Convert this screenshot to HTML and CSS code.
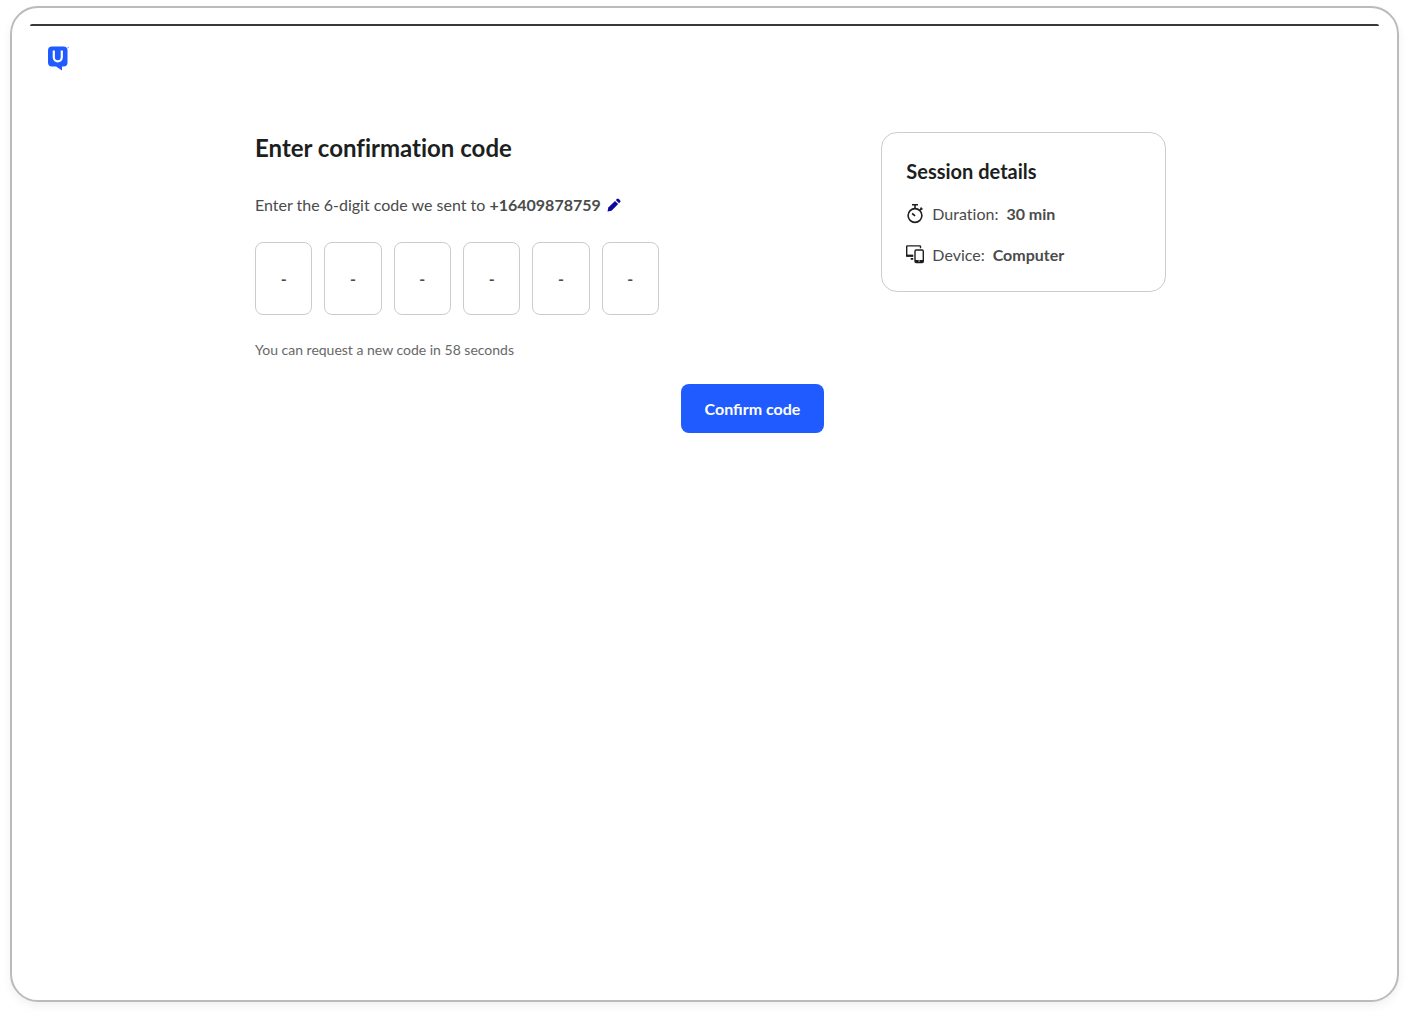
FILE: index.html
```html
<!DOCTYPE html>
<html lang="en">
<head>
  <meta charset="UTF-8" />
  <meta name="viewport" content="width=device-width, initial-scale=1.0"/>
  <title>Enter confirmation code</title>
  <link rel="stylesheet" href="styles.css">
</head>
<body>
  <div class="window">
    <div class="top-line"></div>

    <header class="header">
      <a href="#" class="logo" aria-label="Home">
        <svg width="21" height="25" viewBox="0 0 21 25">
          <path d="M4 .5h11.500a4 4 0 0 1 4 4v12a4 4 0 0 1-4 4H14V24.500l-6-4H4a4 4 0 0 1-4-4v-12a4 4 0 0 1 4-4z" fill="#1f5bff"/>
          <path d="M5.800 4.500v6.800a4 4 0 0 0 8 0V4.500" fill="none" stroke="#fff" stroke-width="2.200"/>
          <circle cx="20.200" cy="1.500" r=".7" fill="#7a9cff"/>
        </svg>
      </a>
    </header>

    <main class="content">
      <form class="confirm">
        <h1>Enter confirmation code</h1>

        <p class="sent-to">
          <span>Enter the 6-digit code we sent to <b>+16409878759</b></span>
          <button type="button" class="edit" aria-label="Edit phone number">
            <svg width="14" height="14" viewBox="0 0 14 14" fill="#0a0a9e">
              <path d="M.5 13.500l.8-4 6.700-6.600 3.200 3.200-6.700 6.600z"/>
              <path d="M8.800 2.100l1-1a1.500 1.500 0 0 1 2.100 0l1.100 1.100a1.500 1.500 0 0 1 0 2.100l-1 1z"/>
            </svg>
          </button>
        </p>

        <div class="code">
          <input type="text" inputmode="numeric" maxlength="1" placeholder="-" aria-label="Digit 1" />
          <input type="text" inputmode="numeric" maxlength="1" placeholder="-" aria-label="Digit 2" />
          <input type="text" inputmode="numeric" maxlength="1" placeholder="-" aria-label="Digit 3" />
          <input type="text" inputmode="numeric" maxlength="1" placeholder="-" aria-label="Digit 4" />
          <input type="text" inputmode="numeric" maxlength="1" placeholder="-" aria-label="Digit 5" />
          <input type="text" inputmode="numeric" maxlength="1" placeholder="-" aria-label="Digit 6" />
        </div>

        <p class="resend">You can request a new code in 58 seconds</p>

        <button type="submit" class="submit">Confirm code</button>
      </form>

      <aside class="session">
        <h2>Session details</h2>
        <div class="detail">
          <svg width="18" height="20" viewBox="0 0 18 20" fill="none" stroke="#1d1f1f" stroke-width="1.600">
            <circle cx="9" cy="11.500" r="6.900"/>
            <path d="M6 .8h6M9 .8V4.500M13.800 6.300l1.700-1.700M14.500 3.700l1.900 1.800M6.100 9.500l3 2.300"/>
          </svg>
          <span>Duration:</span>
          <b>30 min</b>
        </div>
        <div class="detail">
          <svg width="18" height="20" viewBox="0 0 18 20" fill="none" stroke="#1d1f1f" stroke-width="1.400">
            <path d="M14.500 3.200V1.600a.7.700 0 0 0-.7-.7H1.400a.7.700 0 0 0-.7.700V11h6.500"/>
            <path d="M.7 10.600h6.500" stroke-width="2"/>
            <path d="M4.700 13.900h2.500" stroke-width="1.800"/>
            <rect x="9" y="5" width="8.300" height="12.500" rx="1.200"/>
            <path d="M9 16.200h8.300" stroke-width="2.400"/>
            <path d="M12.500 16h1.300" stroke="#fff" stroke-width="1"/>
          </svg>
          <span>Device:</span>
          <b>Computer</b>
        </div>
      </aside>
    </main>
  </div>
</body>
</html>
```

FILE: styles.css
```css
* {
  box-sizing: border-box;
}
body {
  margin: 0;
  padding: 6px 10px 14px;
  min-height: 100vh;
  display: flex;
  font-family: Lato, "Liberation Sans", sans-serif;
  font-size: 16px;
  line-height: 24px;
  font-variant-ligatures: none;
  color: #4a4b4b;
  background: #fff;
}
h1, h2, p {
  margin: 0;
}
button, input {
  font-family: inherit;
}
.window {
  flex: 1;
  padding: 16px 18px;
  border: 2px solid #bbb;
  border-radius: 28px;
  box-shadow: 0 4px 10px rgba(0, 0, 0, 0.06);
}
.top-line {
  height: 2px;
  border-radius: 4px 4px 0 0;
  background: #39393b;
}
.header {
  padding: 20px 18px 0;
}
.logo {
  display: block;
  width: 21px;
}
.logo svg {
  display: block;
}
.content {
  display: grid;
  grid-template-columns: 2fr 1fr;
  gap: 57px;
  align-items: start;
  max-width: 923px;
  margin: 61px auto 0;
  padding-left: 12px;
}
.confirm {
  display: flex;
  flex-direction: column;
  align-items: flex-start;
}
h1 {
  font-size: 24px;
  line-height: 32px;
  color: #1d1f1f;
}
.sent-to {
  display: flex;
  align-items: center;
  gap: 6px;
  margin-top: 29px;
}
.edit {
  padding: 0;
  border: none;
  background: none;
  line-height: 0;
  cursor: pointer;
}
.code {
  display: flex;
  gap: 12px;
  width: 100%;
  max-width: 404px;
  margin-top: 25px;
}
.code input {
  flex: 1;
  min-width: 0;
  height: 73px;
  padding: 0;
  border: 1px solid #ccc;
  border-radius: 8px;
  font-size: 16px;
  text-align: center;
  color: #4a4b4b;
}
.code input::placeholder {
  color: #4a4b4b;
  font-weight: bold;
}
.resend {
  margin-top: 25px;
  font-size: 14px;
  line-height: 20px;
  color: #676868;
}
.submit {
  align-self: flex-end;
  height: 49px;
  margin-top: 24px;
  padding: 0 24px;
  border: none;
  border-radius: 8px;
  font-size: 16px;
  font-weight: bold;
  color: #fff;
  background: #1f5bff;
  cursor: pointer;
}
.session {
  padding: 24px;
  border: 1px solid #ccc;
  border-radius: 16px;
}
h2 {
  font-size: 20px;
  line-height: 28px;
  color: #1d1f1f;
}
.detail {
  display: flex;
  align-items: center;
  gap: 8px;
  margin-top: 17px;
}
```
